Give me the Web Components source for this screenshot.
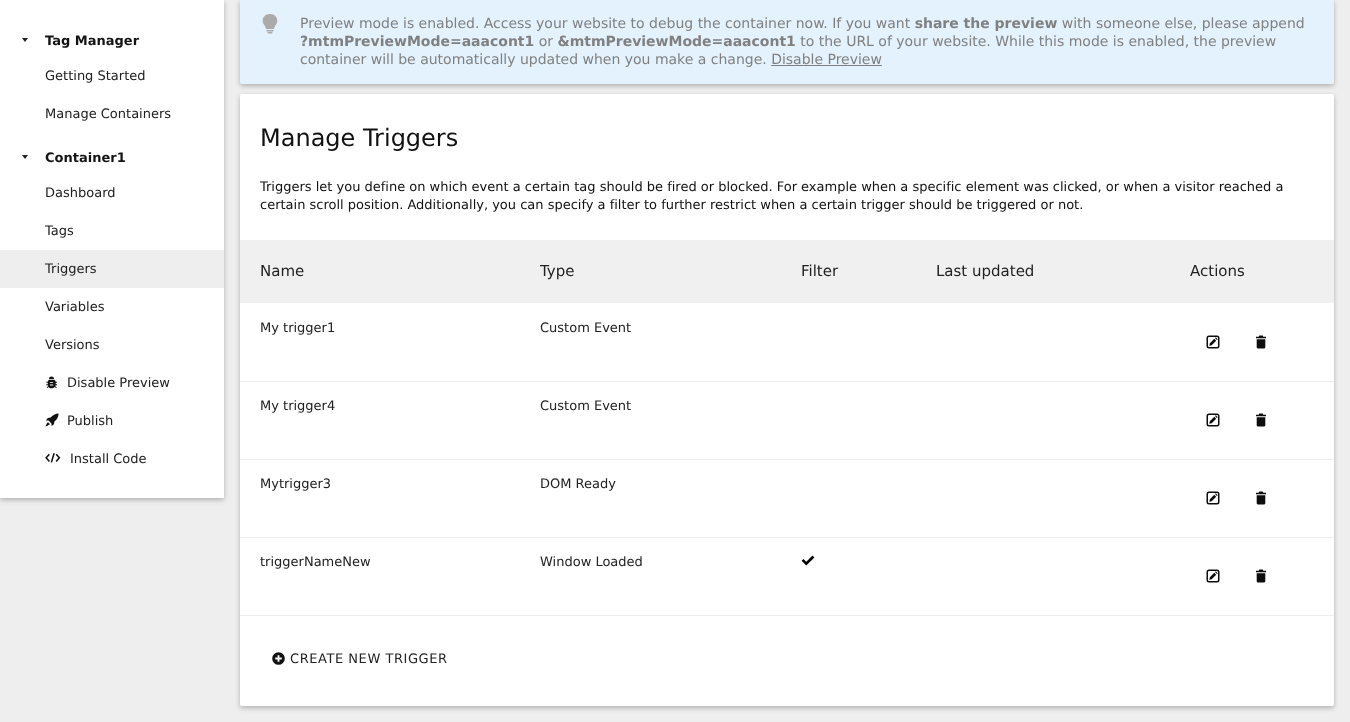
<!DOCTYPE html>
<html>
<head>
<meta charset="utf-8">
<title>Manage Triggers</title>
<style>
  html, body { margin: 0; height: 722px; overflow: hidden; }
  body {
    background: #eeeeee;
    color: #0d0d0d;
    font-family: "DejaVu Sans", sans-serif;
    text-rendering: geometricPrecision;
  }
</style>
</head>
<body>
<mtm-page>
  <side-nav slot="nav">
    <nav-group label="Tag Manager">
      <nav-item>Getting Started</nav-item>
      <nav-item>Manage Containers</nav-item>
    </nav-group>
    <nav-group label="Container1">
      <nav-item>Dashboard</nav-item>
      <nav-item>Tags</nav-item>
      <nav-item active>Triggers</nav-item>
      <nav-item>Variables</nav-item>
      <nav-item>Versions</nav-item>
      <nav-item icon="bug">Disable Preview</nav-item>
      <nav-item icon="rocket">Publish</nav-item>
      <nav-item icon="code" wide>Install Code</nav-item>
    </nav-group>
  </side-nav>
  <preview-notice slot="main">
    Preview mode is enabled. Access your website to debug the container now. If you want <b>share the preview</b> with someone else, please append <b>?mtmPreviewMode=aaacont1</b> or <b>&amp;mtmPreviewMode=aaacont1</b> to the URL of your website. While this mode is enabled, the preview container will be automatically updated when you make a change. <a href="#" style="color:inherit">Disable Preview</a>
  </preview-notice>
  <trigger-card slot="main" heading="Manage Triggers">
    <span slot="intro">Triggers let you define on which event a certain tag should be fired or blocked. For example when a specific element was clicked, or when a visitor reached a certain scroll position. Additionally, you can specify a filter to further restrict when a certain trigger should be triggered or not.</span>
    <trigger-row name="My trigger1" type="Custom Event"></trigger-row>
    <trigger-row name="My trigger4" type="Custom Event"></trigger-row>
    <trigger-row name="Mytrigger3" type="DOM Ready"></trigger-row>
    <trigger-row name="triggerNameNew" type="Window Loaded" filter></trigger-row>
  </trigger-card>
</mtm-page>

<script>
const ICONS = {
  caret: `<svg viewBox="0 0 6 4" width="6" height="4"><path d="M0 0h6L3 4z"/></svg>`,
  bug: `<svg viewBox="0 0 14 14" width="13" height="13"><path d="M4.300 3.200C4.400 1.500 5.500.6 7 .6s2.600.9 2.700 2.600z"/><path fill-rule="evenodd" d="M3.700 4h6.600c.7.7 1.100 1.400 1.200 2.200h1.500v1.200h-1.500v1.400h1.500V10h-1.600c-.1.400-.2.700-.4 1l1.700 1-.6 1-1.800-1.100c-.8.900-1.800 1.400-3.300 1.400s-2.500-.5-3.300-1.400L2.400 13l-.6-1 1.700-1c-.2-.3-.3-.6-.4-1H1.500V8.800H3V7.400H1.500V6.200H3c.1-.8.500-1.500 1.200-2.200zM5.200 6.500v.9h3.600v-.9zM5.200 9.200v.9h3.600v-.9z"/></svg>`,
  rocket: `<svg viewBox="0 0 14 14" width="14" height="14"><path d="M13.600.4C10.500.4 7.500 2 5.600 4.600L2.800 5 .9 7.400l2.700.2 2.800 2.800.2 2.700L9 11.200l.4-2.800C12 6.500 13.600 3.500 13.600.4z"/><path d="M3 9.200C2 9.900 1.200 11.200.5 13.500c2.300-.7 3.600-1.500 4.300-2.500z"/></svg>`,
  code: `<svg viewBox="0 0 16 10" width="15.500" height="9.700" fill="none" stroke="currentColor" stroke-width="1.600"><path d="M4.500 1.300L1.200 5l3.300 3.700M11.500 1.300L14.800 5l-3.300 3.700M9.400.3L6.600 9.700"/></svg>`,
  bulb: `<svg viewBox="0 0 16 20" width="16" height="20" fill="#aaaaaa"><path d="M8 0C3.700 0 .7 2.800.7 6.800c0 3.300 2.700 4.800 3.400 8.200h7.800c.7-3.400 3.400-4.900 3.400-8.200C15.300 2.800 12.300 0 8 0z"/><rect x="4.300" y="15.900" width="7.400" height="1.500" rx=".7"/><rect x="5.500" y="18" width="5" height="1.500" rx=".7"/></svg>`,
  edit: `<svg viewBox="0 0 14 14" width="14" height="14"><path fill-rule="evenodd" d="M3 .5h8A2.500 2.500 0 0 1 13.500 3v8a2.500 2.500 0 0 1-2.500 2.500H3A2.500 2.500 0 0 1 .5 11V3A2.500 2.500 0 0 1 3 .5zM3 2a1 1 0 0 0-1 1v8a1 1 0 0 0 1 1h8a1 1 0 0 0 1-1V3a1 1 0 0 0-1-1z"/><path d="M3.300 10.700l.5-2.400 4.500-4.500 1.900 1.900-4.500 4.500zM9 3.100l.8-.8 1.900 1.900-.8.8z"/></svg>`,
  trash: `<svg viewBox="0 0 12 14" width="12" height="14"><path d="M4.300 .6h3.400l.6 1.200H11v1.500H1V1.800h2.700z"/><path d="M1.700 4.300h8.600v8a1.100 1.100 0 0 1-1.100 1.100H2.800a1.100 1.100 0 0 1-1.100-1.100z"/></svg>`,
  check: `<svg viewBox="0 0 14 11" width="14" height="11"><path d="M.6 5.800l1.900-1.900 2.800 2.800L11.500.6l1.900 1.900-8.100 8.100z"/></svg>`,
  plus: `<svg viewBox="0 0 14 14" width="13" height="13"><path fill-rule="evenodd" d="M7 .2a6.800 6.800 0 1 1 0 13.600A6.800 6.800 0 0 1 7 .2zM6 3.500v2.500H3.500v2H6v2.500h2V8h2.500V6H8V3.500z"/></svg>`
};

class MtmPage extends HTMLElement {
  constructor() {
    super();
    this.attachShadow({ mode: "open" });
    this.shadowRoot.innerHTML = `
      <style>
        :host { display: flex; align-items: flex-start; gap: 16px; width: 1334px; will-change: transform; }
        .nav { flex: 0 0 224px; }
        .main { flex: 1; min-width: 0; display: flex; flex-direction: column; gap: 10px; }
      </style>
      <div class="nav"><slot name="nav"></slot></div>
      <div class="main"><slot name="main"></slot></div>
    `;
  }
}

class SideNav extends HTMLElement {
  constructor() {
    super();
    this.attachShadow({ mode: "open" });
    this.shadowRoot.innerHTML = `
      <style>
        :host {
          display: block;
          height: 498px;
          box-sizing: border-box;
          padding-top: 24px;
          background: #fff;
          box-shadow: 0 2px 5px rgba(0,0,0,.26);
        }
      </style>
      <slot></slot>
    `;
  }
}

class NavGroup extends HTMLElement {
  constructor() {
    super();
    this.attachShadow({ mode: "open" });
  }

  connectedCallback() {
    this.shadowRoot.innerHTML = `
      <style>
        :host { display: block; margin-bottom: 8px; }
        .head {
          height: 33px;
          box-sizing: border-box;
          padding: 1px 0 0 22px;
          display: flex;
          align-items: center;
          font-size: 13px;
          font-weight: bold;
          color: #141414;
        }
        .caret { width: 23px; height: 12px; display: flex; align-items: center; fill: #222; margin-top: -3px; }
      </style>
      <div class="head"><span class="caret">${ICONS.caret}</span>${this.getAttribute("label")}</div>
      <slot></slot>
    `;
  }
}

class NavItem extends HTMLElement {
  constructor() {
    super();
    this.attachShadow({ mode: "open" });
  }

  connectedCallback() {
    const icon = this.getAttribute("icon");
    const gap = this.hasAttribute("wide") ? 25 : 22;
    this.shadowRoot.innerHTML = `
      <style>
        :host {
          display: flex;
          align-items: center;
          box-sizing: border-box;
          height: 38px;
          padding-left: 45px;
          font-size: 13px;
          color: #212121;
        }
        :host([active]) { background: #eeeeee; }
        .icon { flex: 0 0 ${gap}px; display: flex; align-items: center; fill: #111; color: #111; margin-top: -2px; }
      </style>
      ${icon ? `<span class="icon">${ICONS[icon]}</span>` : ""}
      <slot></slot>
    `;
  }
}

class PreviewNotice extends HTMLElement {
  constructor() {
    super();
    this.attachShadow({ mode: "open" });
    this.shadowRoot.innerHTML = `
      <style>
        :host {
          display: flex;
          box-sizing: border-box;
          height: 84px;
          padding: 14px 20px 0 22px;
          gap: 22px;
          background: #e3f2fd;
          color: #808080;
          font-size: 14px;
          line-height: 18px;
          letter-spacing: -.008px;
          border-radius: 0 0 2px 2px;
          box-shadow: 0 2px 5px rgba(0,0,0,.26);
        }
        svg { flex: none; display: block; }
        .text { flex: 1; padding-top: 1px; }
      </style>
      ${ICONS.bulb}
      <div class="text"><slot></slot></div>
    `;
  }
}

class TriggerCard extends HTMLElement {
  constructor() {
    super();
    this.attachShadow({ mode: "open" });
  }

  connectedCallback() {
    this.shadowRoot.innerHTML = `
      <style>
        :host {
          display: block;
          height: 612px;
          box-sizing: border-box;
          background: #fff;
          border-radius: 2px;
          box-shadow: 0 2px 5px rgba(0,0,0,.26);
        }
        h2 { margin: 0; padding: 28px 20px 0; font-size: 24px; line-height: 32px; font-weight: normal; color: #111; }
        p { margin: 0; padding: 25px 20px 0; height: 61px; font-size: 13px; line-height: 18px; letter-spacing: -.006px; color: #111; }
        .head {
          display: grid;
          grid-template-columns: 280px 261px 135px 254px 164px;
          align-items: center;
          box-sizing: border-box;
          height: 63px;
          margin-bottom: 1px;
          padding-bottom: 1px;
          background: #f0f0f0;
          font-size: 15px;
          color: #222;
        }
        .head span { padding-left: 20px; }
        .foot { padding: 36px 32px 0; display: flex; align-items: center; }
      </style>
      <h2>${this.getAttribute("heading")}</h2>
      <p><slot name="intro"></slot></p>
      <div class="head"><span>Name</span><span>Type</span><span>Filter</span><span>Last updated</span><span>Actions</span></div>
      <slot></slot>
      <div class="foot"><create-button>Create new trigger</create-button></div>
    `;
  }
}

class TriggerRow extends HTMLElement {
  constructor() {
    super();
    this.attachShadow({ mode: "open" });
  }

  connectedCallback() {
    this.shadowRoot.innerHTML = `
      <style>
        :host {
          display: grid;
          grid-template-columns: 280px 261px 135px 254px 164px;
          height: 78px;
          box-sizing: border-box;
          border-bottom: 1px solid #eeeeee;
          font-size: 13px;
          color: #222;
        }
        .cell { padding: 17px 0 0 20px; line-height: 16px; }
        .check svg { margin-left: -.5px; }
        .actions { display: flex; gap: 35.500px; padding: 31px 0 0 35.500px; fill: #0d0d0d; }
        svg { display: block; }
        .actions svg + svg { margin-top: -.5px; }
      </style>
      <div class="cell">${this.getAttribute("name")}</div>
      <div class="cell">${this.getAttribute("type")}</div>
      <div class="cell check">${this.hasAttribute("filter") ? ICONS.check : ""}</div>
      <div class="cell"></div>
      <div class="actions">${ICONS.edit}${ICONS.trash}</div>
    `;
  }
}

class CreateButton extends HTMLElement {
  constructor() {
    super();
    this.attachShadow({ mode: "open" });
    this.shadowRoot.innerHTML = `
      <style>
        :host {
          display: inline-flex;
          align-items: center;
          gap: 5px;
          font-size: 13px;
          letter-spacing: .55px;
          text-transform: uppercase;
          color: #222;
          fill: #111;
        }
        svg { display: block; margin-top: -2px; }
      </style>
      ${ICONS.plus}<slot></slot>
    `;
  }
}

customElements.define("mtm-page", MtmPage);
customElements.define("side-nav", SideNav);
customElements.define("nav-group", NavGroup);
customElements.define("nav-item", NavItem);
customElements.define("preview-notice", PreviewNotice);
customElements.define("trigger-card", TriggerCard);
customElements.define("trigger-row", TriggerRow);
customElements.define("create-button", CreateButton);
</script>
</body>
</html>
